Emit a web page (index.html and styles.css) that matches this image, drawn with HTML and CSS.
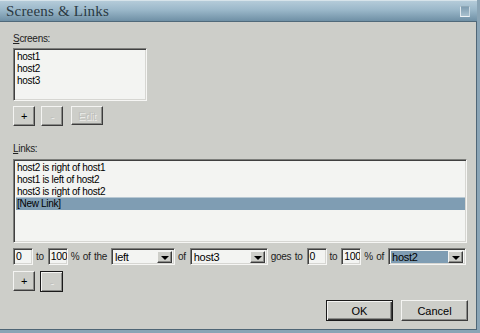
FILE: index.html
```html
<!DOCTYPE html>
<html>
	<head>
		<title>Screens &amp; Links</title>
		<link rel="stylesheet" href="styles.css">
	</head>
	<body>
	<div class="window">
		<div class="titlebar">
			<span class="title">Screens &amp; Links</span>
			<span class="closebox"></span>
		</div>
		<div class="content">
			<div class="label"><u>S</u>creens:</div>
			<div class="list screens">
				<div class="item">host1</div>
				<div class="item">host2</div>
				<div class="item">host3</div>
			</div>
			<div class="btnrow">
				<div class="btn small">+</div>
				<div class="btn small off">-</div>
				<div class="btn edit off">Edit</div>
			</div>

			<div class="label links-label"><u>L</u>inks:</div>
			<div class="list links">
				<div class="item">host2 is right of host1</div>
				<div class="item">host1 is left of host2</div>
				<div class="item">host3 is right of host2</div>
				<div class="item sel">[New Link]</div>
			</div>

			<div class="linkrow">
				<div class="field num">0</div>
				<span class="txt">to</span>
				<div class="field num">100</div>
				<span class="txt">% of the</span>
				<div class="combo side"><span class="val">left</span><span class="arrow"></span></div>
				<span class="txt">of</span>
				<div class="combo host"><span class="val">host3</span><span class="arrow"></span></div>
				<span class="txt">goes to</span>
				<div class="field num">0</div>
				<span class="txt">to</span>
				<div class="field num">100</div>
				<span class="txt">% of</span>
				<div class="combo dest"><span class="val hi">host2</span><span class="arrow"></span></div>
			</div>

			<div class="btnrow second">
				<div class="btn small">+</div>
				<div class="btn small focus off">-</div>
			</div>

			<div class="dlgrow">
				<div class="btn dlg default">OK</div>
				<div class="btn dlg">Cancel</div>
			</div>
		</div>
	</div>
	</body>
</html>
```

FILE: styles.css
```css
body {
	margin: 0;
	padding: 0;
	font-family: "Liberation Sans", Arial, sans-serif;
	font-size: 10px;
	letter-spacing: -0.3px;
	color: #000;
}
.window {
	width: 480px;
	height: 333px;
	box-sizing: border-box;
	background: #cdcec9;
	border-right: 3px solid #8aa4b5;
	border-bottom: 3px solid #8aa4b5;
	box-shadow: inset -1px -1px #4f6676;
	display: flex;
	flex-direction: column;
}
.titlebar {
	height: 20px;
	flex: none;
	background: linear-gradient(#b4cbd9, #9ab7c9 45%, #6f90a5);
	border-top: 1px solid #d6e3ea;
	border-bottom: 1px solid #50697a;
	display: flex;
	align-items: center;
	justify-content: space-between;
	padding: 0 7px 0 6px;
}
.title {
	font-family: "Liberation Serif", "Times New Roman", serif;
	font-size: 15px;
	letter-spacing: 0.2px;
	color: #2a3942;
	margin-top: 1px;
}
.closebox {
	width: 8px;
	height: 9px;
	border: 1px solid;
	border-color: #8fa8b7 #c9d8e1 #eef3f6 #dfe8ee;
	background: linear-gradient(#7f9db1, #a9c1cf);
	margin-top: 1px;
}
.content {
	padding: 11px 0 0 13px;
	display: flex;
	flex-direction: column;
	align-items: flex-start;
}
.label {
	height: 12px;
	line-height: 12px;
	color: #222;
}
.label u {
	text-decoration: underline;
}
.list {
	box-sizing: border-box;
	background: #f3f4f2;
	border: 1px solid;
	border-color: #7d7e7b #f6f6f4 #f6f6f4 #7d7e7b;
	box-shadow: inset 1px 1px #404040, inset -1px -1px #d6d6d2;
	padding: 2px 0 0 2px;
}
.item {
	height: 12px;
	line-height: 12px;
	padding-left: 1px;
}
.item.sel {
	background: #7f9db3;
	box-shadow: 0 -1px #b8c8d3;
}
.screens {
	width: 134px;
	height: 53px;
	margin-top: 3px;
}
.links {
	width: 454px;
	height: 84px;
	margin-top: 4px;
	padding-right: 1px;
}
.links-label {
	margin-top: 17px;
}
.btnrow {
	display: flex;
	gap: 6px;
	margin-top: 5px;
}
.btnrow.second {
	margin-top: 6px;
	gap: 5px;
}
.btn {
	box-sizing: border-box;
	height: 19px;
	border: 1px solid;
	border-color: #f4f4f2 #3c3c3c #3c3c3c #f4f4f2;
	box-shadow: inset -1px -1px #8a8b88;
	display: flex;
	align-items: center;
	justify-content: center;
	font-size: 11px;
}
.btn.small {
	width: 22px;
	height: 20px;
}
.btn.edit {
	width: 32px;
	margin-left: 2px;
}
.btn.off {
	color: #c0c1bd;
	text-shadow: 1px 1px #ecece9;
}
.btn.focus {
	border: 1px solid #1a1a1a;
	box-shadow: inset 1px 1px #f4f4f2, inset -1px -1px #8a8b88;
	width: 23px;
	height: 21px;
}
.linkrow {
	display: flex;
	align-items: center;
	gap: 3px;
	margin-top: 5px;
	height: 17px;
}
.field {
	box-sizing: border-box;
	height: 17px;
	background: #f3f4f2;
	border: 1px solid;
	border-color: #7d7e7b #f6f6f4 #f6f6f4 #7d7e7b;
	box-shadow: inset 1px 1px #404040, inset -1px -1px #d6d6d2;
	line-height: 15px;
	padding-left: 2px;
	font-size: 10.5px;
	letter-spacing: -0.4px;
	overflow: hidden;
	white-space: nowrap;
}
.num {
	width: 20px;
}
.txt {
	color: #222;
	word-spacing: 1px;
	padding-right: 1px;
}
.combo {
	box-sizing: border-box;
	height: 17px;
	background: #f3f4f2;
	border: 1px solid;
	border-color: #7d7e7b #f6f6f4 #f6f6f4 #7d7e7b;
	box-shadow: inset 1px 1px #404040, inset -1px -1px #d6d6d2;
	display: flex;
	padding: 2px 2px 1px 2px;
}
.combo .val {
	flex: 1;
	line-height: 13px;
	padding-left: 1px;
	font-size: 11px;
}
.combo .val.hi {
	background: #7f9db3;
}
.combo .arrow {
	width: 15px;
	box-sizing: border-box;
	border: 1px solid;
	border-color: #f4f4f2 #3c3c3c #3c3c3c #f4f4f2;
	box-shadow: inset -1px -1px #8a8b88;
	background: #cdcec9;
	position: relative;
}
.combo .arrow::after {
	content: "";
	position: absolute;
	left: 3px;
	top: 4px;
	border-left: 4px solid transparent;
	border-right: 4px solid transparent;
	border-top: 4px solid #000;
}
.side {
	width: 64px;
}
.host {
	width: 78px;
}
.dest {
	width: 78px;
}
.dlgrow {
	display: flex;
	gap: 8px;
	align-self: flex-end;
	margin: 8px 9px 0 0;
}
.btn.dlg {
	width: 67px;
	height: 21px;
	font-size: 11px;
	letter-spacing: 0;
}
.btn.default {
	border: 1px solid #1a1a1a;
	box-shadow: inset 1px 1px #f4f4f2, inset -1px -1px #3c3c3c, inset -2px -2px #8a8b88;
}
```
